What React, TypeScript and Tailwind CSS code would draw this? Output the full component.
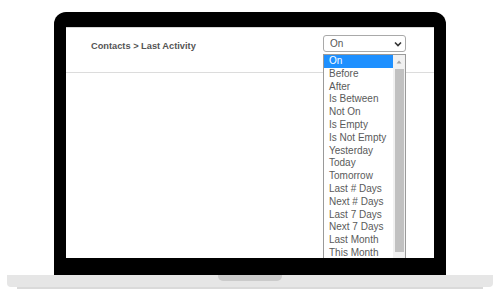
const options = [
  "On",
  "Before",
  "After",
  "Is Between",
  "Not On",
  "Is Empty",
  "Is Not Empty",
  "Yesterday",
  "Today",
  "Tomorrow",
  "Last # Days",
  "Next # Days",
  "Last 7 Days",
  "Next 7 Days",
  "Last Month",
  "This Month",
];

const Dropdown = () => {
  return (
    <div className="absolute left-[257px] top-[26px] w-[83px] h-[234px] bg-white border border-[#9a9a9a] flex">
      <div className="flex-1 flex flex-col">
        {options.map((o, i) => (
          <div
            key={o}
            className={
              i === 0
                ? "h-[12.8px] leading-[12.8px] pl-[5px] text-[10px] bg-[#1e90ff] text-white"
                : "h-[12.8px] leading-[12.8px] pl-[5px] text-[10px] text-[#5a5a5a]"
            }
          >
            {o}
          </div>
        ))}
      </div>
      <div className="w-[12px] bg-[#f1f1f1] flex flex-col items-center">
        <svg width="6" height="14" viewBox="0 0 6 14">
          <polygon points="0.5,8.5 5.5,8.5 3,5.5" fill="#a3a3a3" />
        </svg>
        <div className="w-[9px] h-[183px] bg-[#c1c1c1]" />
      </div>
    </div>
  );
};

const App = () => {
  return (
    <div className="w-[500px] h-[300px] bg-white overflow-hidden font-['Liberation_Sans',Arial,sans-serif]">
      <div className="pt-[12px] flex flex-col items-center">
        <div className="w-[392px] h-[263px] bg-black rounded-t-[12px] px-[12px] pt-[15px] pb-[17px]">
          <div className="relative h-full bg-white overflow-hidden border-t border-[#d6d6d6]">
            <div className="h-[45px] border-b border-[#dcdcdc] flex items-start justify-between pl-[25px] pr-[28px] pt-[7px]">
              <div className="mt-[5px] text-[9.25px] font-bold text-[#555]">
                Contacts &gt; Last Activity
              </div>
              <div className="w-[83px] h-[17px] border border-[#a9a9a9] rounded-[3px] flex items-center justify-between pl-[6px] pr-[3px] text-[10px] text-[#555]">
                <span>On</span>
                <svg width="8" height="6" viewBox="0 0 8 6">
                  <polyline points="1,1.5 4,4.5 7,1.5" fill="none" stroke="#333" strokeWidth="1.6" />
                </svg>
              </div>
            </div>
            <Dropdown />
          </div>
        </div>
        <div className="w-[486px] h-[12px] bg-[#e6e6e6] rounded-b-[4px] flex justify-center">
          <div className="w-[64px] h-[6px] bg-[#cbcbcb] rounded-b-[5px]" />
        </div>
        <div className="w-[466px] h-[2px] bg-[#dadada]" />
      </div>
    </div>
  );
};

export default App;
